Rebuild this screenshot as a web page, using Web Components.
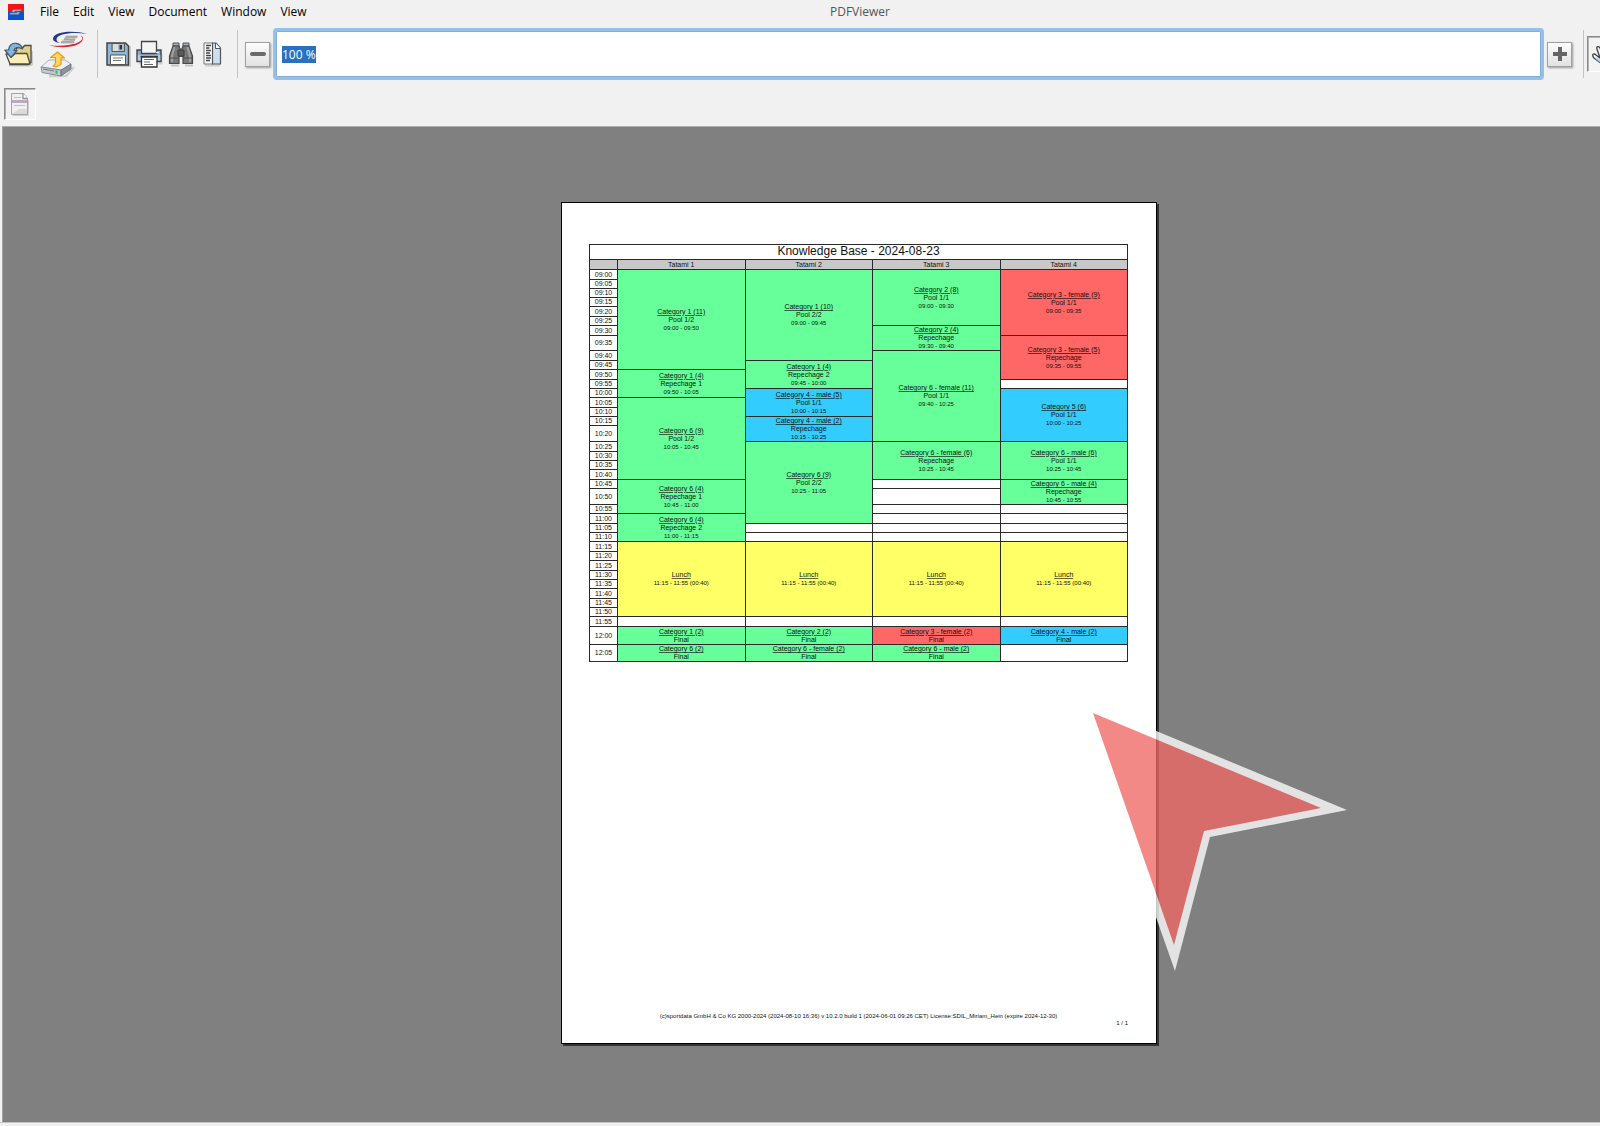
<!DOCTYPE html>
<html lang="en">
<head>
<meta charset="utf-8">
<title>PDFViewer</title>
<style>
html, body { margin: 0; min-height: 100vh; background: #f1f1f1; }
body { font-family: "Open Sans", "Noto Sans", sans-serif; font-size: 12px; color: #000; overflow: hidden; }
</style>
</head>
<body>
<pdf-window></pdf-window>

<template id="window-tpl">
<style>
:host { display: flex; flex-direction: column; min-height: 100vh; }
pdf-canvas { flex: 1; }
footer { height: 3px; background: #f1f1f1; border-top: 1px solid #c4c4c4; }
</style>
<menu-bar></menu-bar>
<tool-bar></tool-bar>
<pdf-canvas><pdf-sheet><tatami-schedule></tatami-schedule></pdf-sheet></pdf-canvas>
<footer></footer>
</template>

<template id="menu-tpl">
<style>
:host { display: grid; grid-template-columns: 1fr auto 1fr; height: 24px; align-items: center; padding-left: 8px; line-height: 16px; }
.left { display: flex; align-items: center; gap: 16px; }
svg { display: block; }
nav { display: flex; gap: 14px; }
button { font: inherit; border: 0; background: none; padding: 0; color: #000; white-space: nowrap; }
h1 { font: inherit; margin: 0; color: #555; padding-left: 112px; }
</style>
<div class="left">
<svg width="16" height="16" viewBox="0 0 16 16"><path fill="#f01414" d="M0 0h16v8H0z"/><path fill="#0a55c8" d="M0 8h16v8H0z"/><path d="M5 5.500h8.500l-.6 1.500H7l-.3 1h5l-1 2.500H1.500L2.200 9h6.500l.3-.8H3.500z" fill="#b9b4c4" stroke="#5b5577" stroke-width=".4"/></svg>
<nav><button>File</button><button>Edit</button><button>View</button><button>Document</button><button>Window</button><button>View</button></nav>
</div>
<h1>PDFViewer</h1><span></span>
</template>

<template id="tool-tpl">
<style>
:host { display: block; padding: 4px 0 6px; }
.row { display: flex; align-items: center; height: 52px; padding-left: 4px; overflow: hidden; }
.second { height: 32px; padding-top: 8px; }
.sep { flex: none; width: 1px; height: 48px; background: #c4c4c4; }
.group { display: flex; align-items: center; }
.files { gap: 7px; margin-right: 9px; }
.docs { gap: 5px; margin: 0 11px 0 8px; }
input { flex: 1; min-width: 0; height: 52px; box-sizing: border-box; margin: 0 3px; padding: 0 6px; border: 3px solid #91c1ee; border-radius: 4px; background: #fff; outline: 0; font: 12px/16px "Open Sans", "Noto Sans", sans-serif; color: #000; box-shadow: inset 0 0 0 1px #84add4; }
input::selection { background: #2672c0; color: #fff; }
.minus { margin-left: 7px; }
.plus { margin-right: 11px; }
.clip { flex: none; width: 13px; margin-left: 3px; overflow: hidden; }
</style>
<div class="row">
<div class="group files">
<tool-button label="Open"><svg width="29" height="26" viewBox="0 0 29 26"><path d="M5 24.500h20l3-1V10" fill="none" stroke="#ccc" stroke-width="2"/><path d="M13 6.500h6l1.500-2h6.500v17l-3 2H6z" fill="#e3cf8c" stroke="#4c4a42" stroke-width="1.300"/><path d="M2 13h5l1.500 2 2.500-2.500h12L26 23H6z" fill="#fbeeb8" stroke="#4c4a42" stroke-width="1.300" stroke-linejoin="round"/><path d="M18.500 8C17 2 8.500 0 5.500 5.500L4.500 9H.8L7 16.500 13 9.500H10C10.500 6.500 14 5.500 18.500 8z" fill="#82b4de" stroke="#3f5a74" stroke-width="1.200" stroke-linejoin="round"/></svg></tool-button>
<tool-button label="Upload"><svg width="48" height="48" viewBox="0 0 48 48"><path d="M47 4C36 .5 13 .5 13 9c0 2 3 3.500 7 4-2.500-1-3.500-2-3.500-4C17 3.500 34 1.500 47 4z" fill="#27398f"/><path d="M40 5.500c9 5-10 13-31 9.500C22 19.500 43 17 43 8c0-1.200-1-2-3-2.500z" fill="#dc2430"/><path d="M26 6h11.500l-1 2H27.500l-.5 1h8l-1.500 4H21l1-2h8.500l.3-1h-7z" fill="#b4b4b8" stroke="#888" stroke-width=".5"/><path d="M9 46h17l8-9" fill="none" stroke="#d0d0d0" stroke-width="2.500"/><path d="M1 37l8-7h16l6 4-9 6z" fill="#eceff3" stroke="#9a9fa6" stroke-width=".8"/><path d="M1 37l20 3v6L2 42.500z" fill="#c4c9d0" stroke="#777e87" stroke-width=".8"/><path d="M21 40l10-6v5l-10 7z" fill="#8d949e" stroke="#666e78" stroke-width=".8"/><path d="M3 39l11 2" stroke="#6e7681" stroke-width="1"/><rect x="15.500" y="40.500" width="2" height="3" fill="#2cc05a"/><path d="M17.500 22l7 6-3.500-.2V34c-2 3-6 3-8 2 2-1 2.500-2 2.500-4v-4.500h-5z" fill="#ffd768" stroke="#e79a1a" stroke-width="1.200" stroke-linejoin="round"/></svg></tool-button>
</div>
<span class="sep"></span>
<div class="group docs">
<tool-button label="Save"><svg width="25" height="26" viewBox="0 0 25 26"><path d="M3 25h21V5" fill="none" stroke="#d0d0d0" stroke-width="2"/><path d="M1 2h18.500l3 3v19H1z" fill="#8db8da" stroke="#444" stroke-width="1.500"/><path d="M6 2.500h12.500v8H6z" fill="#b9bcc0" stroke="#555" stroke-width="1"/><path d="M7 3h5v7H7z" fill="#ddd"/><path d="M13.500 4h2.500v4.500h-2.500z" fill="#333"/><path d="M4.500 14h15v9.500h-15z" fill="#fff" stroke="#555"/><path d="M7 17h10M7 19.500h8" stroke="#777" stroke-width="1.200"/></svg></tool-button>
<tool-button label="Print"><svg width="27" height="29" viewBox="0 0 27 29"><path d="M3 23.500h22.500V13" fill="none" stroke="#d0d0d0" stroke-width="2"/><path d="M1 10h24v11.500H1z" fill="#83aed2" stroke="#444" stroke-width="1.400"/><path d="M1.800 15h22.500v5.500H1.800z" fill="#b0cde5"/><path d="M5.500 1.500h15v12h-15z" fill="#f4f4f4" stroke="#444" stroke-width="1.300"/><path d="M4.500 16.500h17.500" stroke="#444" stroke-width="1.500"/><path d="M5.500 17h15.500V27H5.500z" fill="#fff" stroke="#333" stroke-width="1.300"/><path d="M8 19.500h10M8 22h6M8 24.500h9" stroke="#666" stroke-width="1.200"/><path d="M20 12.500h3" stroke="#def" stroke-width="1.300"/></svg></tool-button>
<tool-button label="Find"><svg width="26" height="26" viewBox="0 0 26 26"><path d="M3 24.500h8M17 24.500h8" stroke="#c4c4c4" stroke-width="2"/><path d="M5 2h6v3H5zM15 2h6v3h-6z" fill="#9db1c2" stroke="#555"/><path d="M5 5h6l1 3h2l1-3h6l3.500 10v7.500H15v-7h-4v7H1.500V15z" fill="#777" stroke="#484848" stroke-width="1.200"/><path d="M6.500 6L4 15v6M19.500 6l2.500 9v6" fill="none" stroke="#a0a0a0" stroke-width="2"/><path d="M10 9h6v6h-6z" fill="#5a5a5a" stroke="#3c3c3c"/><path d="M2 17h8.500M15.500 17H24" stroke="#505050"/></svg></tool-button>
<tool-button label="Outline"><svg width="27" height="26" viewBox="0 0 27 26"><path d="M6 24.500h14V9" stroke="#d0d0d0" stroke-width="2" fill="none"/><path d="M5 2h9v21H5z" fill="#fff" stroke="#777"/><path d="M7 4.500H12M7 7H10.500M7 9.500H12M7 12H11M7 14.500H12M7 17H12M7 19.500H11" stroke="#444" stroke-width="1.300"/><path d="M13.500 2H17l4.500 5v16h-8z" fill="#cbdff0" stroke="#555" stroke-width="1.200"/><path d="M16.500 2v5.500h5" fill="#fff" stroke="#555"/></svg></tool-button>
</div>
<span class="sep"></span>
<tool-button class="minus" label="Zoom out" variant="raised"><svg width="16" height="16"><path d="M2 8h12" stroke="#6a6a6a" stroke-width="4" stroke-linecap="round"/></svg></tool-button>
<input type="text" value="100 %" aria-label="Zoom">
<tool-button class="plus" label="Zoom in" variant="raised"><svg width="16" height="16"><path d="M1 8h14M8 1v14" stroke="#666" stroke-width="4"/></svg></tool-button>
<span class="sep"></span>
<div class="clip"><tool-button label="Pan" variant="sunken"><svg width="28" height="30" viewBox="0 0 28 30"><path d="M14 27L3 19c-3-4 0-5 2-3l4 3L6 10c-1-3 2-3 3-1l2 6V6c0-3 3-3 3 0v8l3-7c1-2 4-1 3 1l-2 9 3-3c2-2 4 0 2 2l-5 10z" fill="#fff" stroke="#444" stroke-width="1.400"/><path d="M5 19l8 6" stroke="#b8d0e8" stroke-width="2"/></svg></tool-button></div>
</div>
<div class="row second">
<tool-button label="Single page" variant="sunken"><svg width="20" height="24" viewBox="0 0 20 24"><path d="M3 23.500h15.500V8" fill="none" stroke="#d0d0d0"/><path d="M1.500 1.500h12l4 5v16h-16z" fill="#f0f0f0" stroke="#a4a4a4"/><path d="M13 1.500v5h4.500" fill="#fff" stroke="#909090" stroke-width="1.300"/><path d="M2 8h15v3H2z" fill="#b9a8c6"/><path d="M4 5.500h7M4 13.500h11" stroke="#c0c0c0"/><path d="M9 17h8v5H2z" fill="#dadada"/></svg></tool-button>
</div>
</template>

<template id="button-tpl">
<style>
:host { display: block; flex: none; }
button { display: flex; align-items: center; justify-content: center; margin: 0; padding: 0; border: 0; background: none; box-sizing: border-box; }
:host([variant="raised"]) button { width: 25px; height: 25px; border: 1px solid #a0a0a0; background: linear-gradient(#fdfdfd, #e2e2e2); box-shadow: 1px 1px 2px #999; }
:host([variant="sunken"]) button { width: 32px; height: 32px; border: 1px solid; border-color: #8a8a8a #fff #fff #8a8a8a; box-shadow: inset 1px 1px 0 #b4b4b4; background: #f3f3f3; }
:host([label="Pan"]) button { height: 36px; width: 36px; }
</style>
<button><slot></slot></button>
</template>

<template id="canvas-tpl">
<style>
:host { display: flex; justify-content: center; align-items: flex-start; box-sizing: border-box; margin-left: 2px; padding: 75px 0 77px 115px; background: #808080; border-top: 1px solid #b0b0b0; border-left: 1px solid #a0a0a0; }
</style>
<slot></slot>
</template>

<template id="sheet-tpl">
<style>
:host { position: relative; display: flex; flex-direction: column; box-sizing: border-box; width: 596px; min-height: 842px; padding: 41px 28px 16px 27px; background: #fff; border: 1px solid #000; box-shadow: 2px 2px 0 #333; font: 6px/7px "Liberation Sans", Arial, sans-serif; color: #111; }
footer { margin-top: auto; text-align: center; }
footer p { margin: 0; }
footer p:last-child { text-align: right; }
.pointer { position: absolute; left: 517px; top: 495px; opacity: .78; }
</style>
<slot></slot>
<footer><p>(c)sportdata GmbH &amp; Co KG 2000-2024 (2024-08-10 16:36) v 10.2.0 build 1 (2024-06-01 09:26 CET) License:SDIL_Miriam_Hein (expire 2024-12-30)</p><p>1 / 1</p></footer>
<svg class="pointer" width="270" height="275" viewBox="1079 698 270 275" aria-hidden="true"><path fill="#fff" d="M1079 699L1347 810 1210 837 1175 971z"/><path fill="#f06866" d="M1093 713L1321 808 1204 831 1174 945z"/></svg>
</template>

<template id="schedule-tpl">
<style>
:host { display: block; }
table { width: 100%; border-collapse: collapse; table-layout: fixed; font-size: 7px; line-height: 8px; }
col:first-child { width: 28px; }
th, td { border: 1px solid #2a2a2a; padding: 0; text-align: center; vertical-align: middle; font-weight: normal; overflow: hidden; }
.title { height: 14px; font-size: 12px; line-height: 12px; vertical-align: top; }
.heads th { background: #c8c8c8; height: 9px; }
tbody th { background: #fff; }
u, span, small { display: block; }
u { text-decoration-thickness: 1px; text-underline-offset: 1px; text-decoration-color: #0009; }
small { font-size: 6px; }
.g { background: #66ff99; } .b { background: #33ccff; } .r { background: #ff6666; } .y { background: #ffff66; }
</style>
<table><colgroup><col><col><col><col><col></colgroup>
<thead><tr><th class="title" colspan="5">Knowledge Base - 2024-08-23</th></tr>
<tr class="heads"><th></th><th>Tatami 1</th><th>Tatami 2</th><th>Tatami 3</th><th>Tatami 4</th></tr></thead>
<tbody></tbody></table>
</template>

<script>
const fromTemplate = (id, ready) => class extends HTMLElement {
  constructor() {
    super();
    this.attachShadow({ mode: "open" }).append(document.getElementById(id).content.cloneNode(true));
  }
  connectedCallback() { if (ready) ready.call(this, this.shadowRoot); }
};

customElements.define("tool-button", fromTemplate("button-tpl", function (root) {
  root.querySelector("button").setAttribute("aria-label", this.getAttribute("label"));
}));
customElements.define("menu-bar", fromTemplate("menu-tpl"));
customElements.define("tool-bar", fromTemplate("tool-tpl", function (root) {
  const zoom = root.querySelector("input");
  zoom.focus();
  zoom.select();
}));
customElements.define("pdf-canvas", fromTemplate("canvas-tpl"));
customElements.define("pdf-sheet", fromTemplate("sheet-tpl"));

// Time slots: label and row height.
const slots = `09:00 10,09:05 9,09:10 9,09:15 9,09:20 10,09:25 9,09:30 10,09:35 15,09:40 10,09:45 9,09:50 10,09:55 9,10:00 9,10:05 10,10:10 9,10:15 9,10:20 16,10:25 10,10:30 9,10:35 9,10:40 10,10:45 9,10:50 16,10:55 9,11:00 10,11:05 9,11:10 9,11:15 10,11:20 9,11:25 10,11:30 9,11:35 9,11:40 10,11:45 9,11:50 9,11:55 10,12:00 18,12:05 17`
  .split(",").map(s => s.split(" "));
// One list per tatami: rows spanned, colour, name, round, time. An empty entry is a free slot.
const free = [1, "", "", "", ""];
const lunch = [8, "y", "Lunch", "", "11:15 - 11:55 (00:40)"];
const tatamis = [
  [[10, "g", "Category 1 (11)", "Pool 1/2", "09:00 - 09:50"], [3, "g", "Category 1 (4)", "Repechage 1", "09:50 - 10:05"],
   [8, "g", "Category 6 (9)", "Pool 1/2", "10:05 - 10:45"], [3, "g", "Category 6 (4)", "Repechage 1", "10:45 - 11:00"],
   [3, "g", "Category 6 (4)", "Repechage 2", "11:00 - 11:15"], lunch, free,
   [1, "g", "Category 1 (2)", "Final", ""], [1, "g", "Category 6 (2)", "Final", ""]],
  [[9, "g", "Category 1 (10)", "Pool 2/2", "09:00 - 09:45"], [3, "g", "Category 1 (4)", "Repechage 2", "09:45 - 10:00"],
   [3, "b", "Category 4 - male (5)", "Pool 1/1", "10:00 - 10:15"], [2, "b", "Category 4 - male (2)", "Repechage", "10:15 - 10:25"],
   [8, "g", "Category 6 (9)", "Pool 2/2", "10:25 - 11:05"], free, free, lunch, free,
   [1, "g", "Category 2 (2)", "Final", ""], [1, "g", "Category 6 - female (2)", "Final", ""]],
  [[6, "g", "Category 2 (8)", "Pool 1/1", "09:00 - 09:30"], [2, "g", "Category 2 (4)", "Repechage", "09:30 - 09:40"],
   [9, "g", "Category 6 - female (11)", "Pool 1/1", "09:40 - 10:25"], [4, "g", "Category 6 - female (6)", "Repechage", "10:25 - 10:45"],
   free, free, free, free, free, free, lunch, free,
   [1, "r", "Category 3 - female (2)", "Final", ""], [1, "g", "Category 6 - male (2)", "Final", ""]],
  [[7, "r", "Category 3 - female (9)", "Pool 1/1", "09:00 - 09:35"], [4, "r", "Category 3 - female (5)", "Repechage", "09:35 - 09:55"],
   free, [5, "b", "Category 5 (6)", "Pool 1/1", "10:00 - 10:25"], [4, "g", "Category 6 - male (6)", "Pool 1/1", "10:25 - 10:45"],
   [2, "g", "Category 6 - male (4)", "Repechage", "10:45 - 10:55"], free, free, free, free, lunch, free,
   [1, "b", "Category 4 - male (2)", "Final", ""], free]
];

customElements.define("tatami-schedule", fromTemplate("schedule-tpl", function (root) {
  const next = tatamis.map(() => ({ index: 0, row: 0 }));
  const tag = (name, text) => text ? `<${name}>${text}</${name}>` : "";
  root.querySelector("tbody").innerHTML = slots.map(([label, height], row) => {
    const cells = tatamis.map((list, i) => {
      if (next[i].row !== row) return "";
      const [span, colour, name, round, time] = list[next[i].index++];
      next[i].row += span;
      return `<td rowspan="${span}" class="${colour}">${tag("u", name)}${tag("span", round)}${tag("small", time)}</td>`;
    }).join("");
    return `<tr style="height:${height}px"><th>${label}</th>${cells}</tr>`;
  }).join("");
}));
customElements.define("pdf-window", fromTemplate("window-tpl"));
</script>
</body>
</html>
